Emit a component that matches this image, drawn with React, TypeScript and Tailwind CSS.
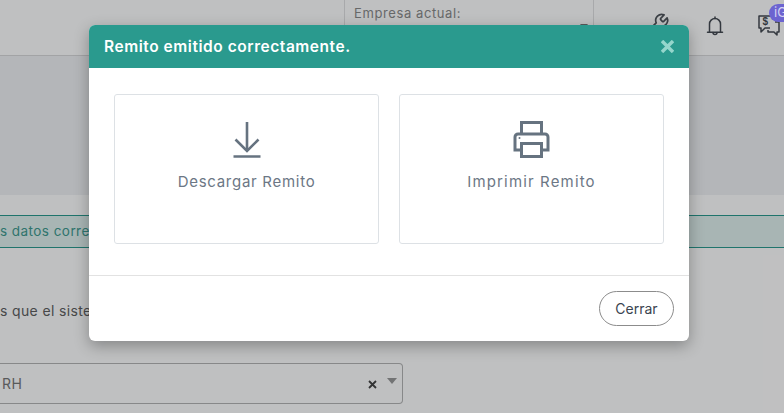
import type { ReactNode } from "react";

const font = { fontFamily: '"Inter", "Liberation Sans", sans-serif' };

function WrenchIcon() {
  return (
    <svg width="24" height="24" viewBox="0 0 24 24" fill="none" stroke="#50555b" strokeWidth="1.7" strokeLinejoin="round">
      <path d="M14.7 6.3a1 1 0 0 0 0 1.4l1.6 1.6a1 1 0 0 0 1.4 0l3.400-3.400a6 6 0 0 1-7.900 7.900l-6.900 6.900a2.100 2.100 0 0 1-3-3l6.900-6.900a6 6 0 0 1 7.900-7.900z" />
    </svg>
  );
}

function BellIcon() {
  return (
    <svg width="18" height="22" viewBox="0 0 18 22" fill="none" stroke="#454a52" strokeWidth="1.5" strokeLinejoin="round" strokeLinecap="round">
      <path d="M3.500 17V9a5.500 5.500 0 0 1 11 0v8" />
      <path d="M1.500 17.200h15" />
      <path d="M7 17.500a2 2 0 0 0 4 0" />
      <path d="M9 2v1.500" />
    </svg>
  );
}

function ChatDollarIcon() {
  return (
    <svg width="24" height="22" viewBox="0 0 24 22" fill="none" stroke="#454a52" strokeWidth="1.5" strokeLinejoin="round">
      <path d="M15 2H2v12h2v4l4-4h5" />
      <path d="M18 8h4v10h-2v3l-3-3h-6v-2" />
      <text x="5.500" y="11" fontSize="10" fontWeight="700" fill="#454a52" stroke="none" fontFamily="Liberation Sans">$</text>
    </svg>
  );
}

function DownloadIcon() {
  return (
    <svg width="28" height="36" viewBox="0 0 28 36" fill="none" stroke="#667380" strokeWidth="2.600">
      <path d="M14 0v28.500" />
      <path d="M2.500 17.500L14 29l11.500-11.500" />
      <path d="M0.500 34.500h27" />
    </svg>
  );
}

function PrinterIcon() {
  return (
    <svg width="37" height="37" viewBox="0 0 37 37" fill="none" stroke="#667380" strokeWidth="3">
      <path d="M8.500 13V1.500h20V13" />
      <path d="M8 29H2V16a3 3 0 0 1 3-3h27a3 3 0 0 1 3 3v13h-6" />
      <rect x="8.500" y="22.500" width="20" height="13" />
      <circle cx="6.500" cy="17" r="1" fill="#667380" stroke="none" />
    </svg>
  );
}

function OptionCard({ label, wide, children }: { label: string; wide?: boolean; children: ReactNode }) {
  return (
    <button className="h-[150px] flex-1 rounded-[3px] border border-[#dde1e5] bg-white flex flex-col items-center pt-[25px]">
      <div className="h-[38px] flex items-end justify-center">{children}</div>
      <span className={`mt-[13px] text-[15px] leading-[22px] text-[#6c7785] ${wide ? "tracking-[1.15px]" : "tracking-[0.72px]"}`}>{label}</span>
    </button>
  );
}

export default function App() {
  return (
    <div className="relative h-[413px] w-[784px] overflow-hidden bg-white" style={font}>
      {/* page behind the modal */}
      <header className="flex h-[56px] border-b border-[#d8d8da] bg-white">
        <div className="w-[344px]" />
        <div className="w-[250px] border-x border-[#e0e0e2] pl-[9px] relative">
          <span className="text-[13px] tracking-[0.6px] text-[#8a8a8a]">Empresa actual:</span>
          <span className="absolute right-[5px] top-[24px] h-0 w-0 border-x-[4px] border-t-[5px] border-x-transparent border-t-[#777]" />
        </div>
        <div className="flex flex-1 items-start">
          <div className="ml-[52px] mt-[12px]"><WrenchIcon /></div>
          <div className="ml-[36px] mt-[15px]"><BellIcon /></div>
          <div className="ml-[33px] mt-[14px]"><ChatDollarIcon /></div>
        </div>
      </header>
      <div className="h-[139px] bg-[#f1f2f4]" />
      <div className="mt-[20px] flex h-[33px] items-center border-y border-[#2a9a8e] bg-[#e0f1ee] text-[13.500px] tracking-[0.45px] text-[#3f9a8f]">
        s datos correctos
      </div>
      <p className="mt-[52px] text-[14px] tracking-[0.35px] text-[#5f5f5f]">s que el sistema</p>
      <div className="mt-[42px] flex h-[41px] w-[403px] items-center rounded-r-[4px] border border-l-0 border-[#b5b5b5] pl-[2px] text-[14px] tracking-[0.6px] text-[#777]">
        <span className="flex-1">RH</span>
        <svg width="9" height="9" viewBox="0 0 9 9" stroke="#444" strokeWidth="1.8" className="mr-[10px] mt-[1px]">
          <path d="M1 1l7 7M8 1L1 8" />
        </svg>
        <span className="mr-[5px] mb-[6px] h-0 w-0 border-x-[5px] border-t-[6px] border-x-transparent border-t-[#999]" />
      </div>

      {/* overlay */}
      <div className="absolute inset-0 bg-[#010206]/25" />
      <div className="absolute right-[-13px] top-[4px] flex h-[18px] w-[28px] items-center rounded-full bg-[#6c64d0] pl-[5px] text-[13px] text-[#d5d3f2]">
        iG
      </div>

      {/* modal */}
      <div className="absolute left-[89px] top-[25px] w-[600px] overflow-hidden rounded-[6px] bg-white shadow-[0_5px_15px_rgba(0,0,0,0.3)]">
        <div className="flex h-[43px] items-center justify-between bg-[#2a9a8e] px-[15px]">
          <h2 className="text-[15.500px] font-semibold tracking-[0.55px] text-white">Remito emitido correctamente.</h2>
          <svg width="13" height="13" viewBox="0 0 13 13" stroke="#95d6cc" strokeWidth="3.400" className="mb-[1px]">
            <path d="M1 1l11 11M12 1L1 12" />
          </svg>
        </div>
        <div className="flex h-[208px] gap-[20px] border-b border-[#e2e2e2] px-[25px] pt-[26px]">
          <OptionCard label="Descargar Remito"><DownloadIcon /></OptionCard>
          <OptionCard label="Imprimir Remito" wide><PrinterIcon /></OptionCard>
        </div>
        <div className="flex h-[65px] items-center justify-end pr-[15px]">
          <button className="h-[35px] w-[75px] rounded-full border border-[#8c8c8c] text-[14px] text-[#3a4450]">
            Cerrar
          </button>
        </div>
      </div>
    </div>
  );
}
